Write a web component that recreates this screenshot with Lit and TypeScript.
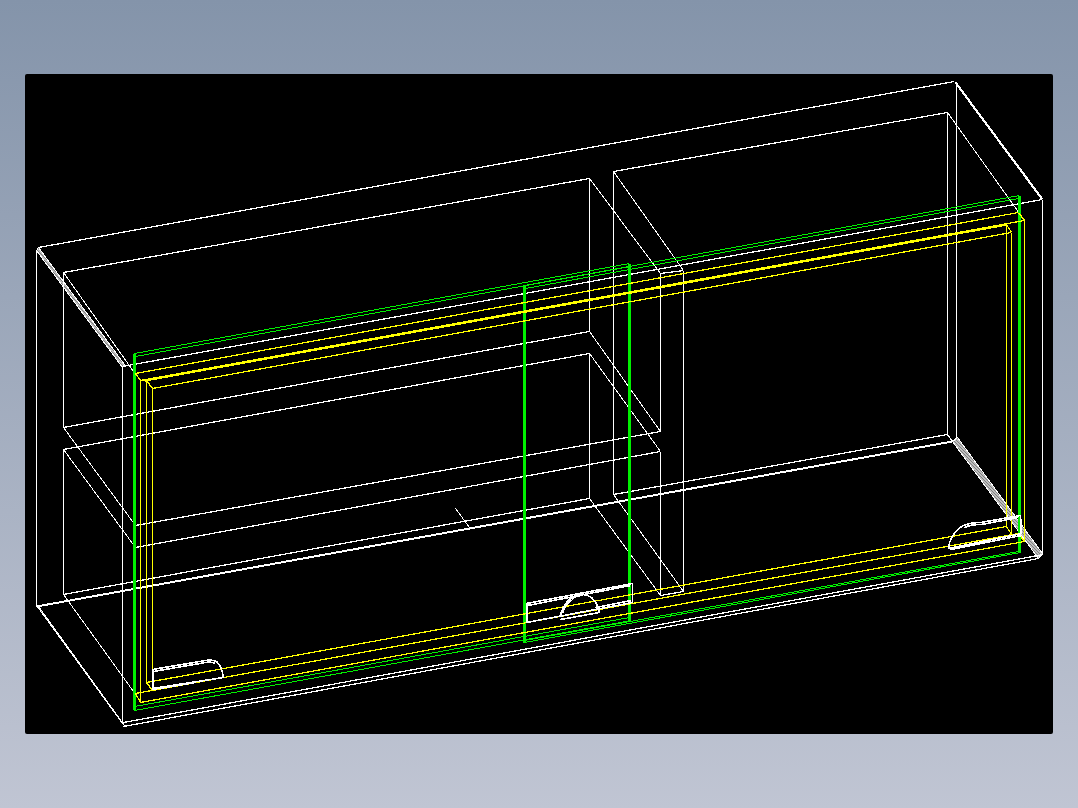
import { LitElement, html, svg, css } from 'lit';
import { customElement } from 'lit/decorators.js';

type Seg = [number, number, number, number, number?];

const LINE_W = 1.25;
const THIN_W = 1;

const WHITE: Seg[] = [
  // outer shell
  [38, 247, 954, 81],
  [36, 250, 36, 605],
  [122, 366, 1042, 199],
  [122, 367, 122, 723],
  [123, 726, 1038, 558],
  [123, 722, 1043, 554],
  [955, 82, 1042, 199, 2.2],
  [956, 82, 956, 437],
  [1042, 199, 1042, 554],
  [36, 606, 952, 441, 2],
  // back panel
  [63, 272, 589, 178],
  [613, 171, 947, 112],
  [63, 272, 63, 427],
  [63, 449, 63, 594],
  [63, 594, 589, 498],
  [613, 494, 947, 434],
  [947, 112, 947, 434],
  [947, 434, 952, 441],
  [63, 272, 133, 371, THIN_W],
  [63, 594, 133, 691, THIN_W],
  [947, 112, 1024, 220, THIN_W],
  // divider
  [589, 178, 589, 331],
  [589, 353, 589, 498],
  [613, 171, 613, 494],
  [589, 178, 660, 273, THIN_W],
  [613, 171, 683, 270, THIN_W],
  [660, 273, 683, 270],
  [660, 273, 660, 431],
  [660, 451, 660, 595],
  [683, 270, 683, 591],
  [660, 595, 683, 591],
  [589, 498, 660, 595, THIN_W],
  [613, 494, 683, 591, THIN_W],
  // shelf
  [63, 427, 589, 331],
  [63, 449, 589, 353],
  [589, 331, 660, 431, THIN_W],
  [589, 353, 660, 451, THIN_W],
  [63, 427, 135, 525, THIN_W],
  [63, 449, 135, 547, THIN_W],
  [135, 525, 660, 431],
  [135, 547, 660, 451],
  // stray tick
  [455, 508, 469, 527, THIN_W],
];

// the mitred side faces, seen nearly edge on
const BANDS = [
  '36,250 38,247 124,364 122,367',
  '36,605 38,606 124,725 122,723',
  '957,437 1042,553 1038,558 952,441',
];

const GREEN: Seg[] = [
  // left door
  [134, 353, 134, 709, 2.5],
  [134, 353, 629, 263, THIN_W],
  [135, 356, 630, 266, THIN_W],
  [134, 706, 629, 617, THIN_W],
  [134, 710, 631, 620, THIN_W],
  [629, 263, 629, 620, 3],
  // right door
  [524, 285, 524, 642, 2.5],
  [524, 285, 1019, 195, THIN_W],
  [525, 288, 1018, 198, THIN_W],
  [524, 640, 1018, 551, THIN_W],
  [524, 642, 1020, 552, THIN_W],
  [1019, 195, 1019, 552, 3],
];

const YELLOW: Seg[] = [
  // top rails
  [135, 373, 1018, 212],
  [140, 380, 1024, 220],
  [144, 380, 1006, 224, 2.4],
  [152, 388, 1011, 232],
  // bottom rails
  [135, 693, 1018, 533],
  [140, 702, 1024, 541],
  [146, 682, 1006, 526],
  // uprights
  [140, 380, 140, 702],
  [146, 380, 146, 682],
  [152, 388, 152, 690],
  [1006, 224, 1006, 526],
  [1011, 232, 1011, 534],
  [1024, 220, 1024, 541],
  // mitres
  [135, 373, 140, 380],
  [146, 380, 152, 388],
  [1006, 224, 1011, 232],
  [1018, 212, 1024, 220],
  [135, 693, 140, 702],
  [146, 682, 152, 690],
  [1006, 526, 1011, 534],
  [1018, 533, 1024, 541],
];

const HANDLES = [
  // left
  'M152 669 L205 660 Q213 659 216 661 Q221 665 223 677 L152 688 Z',
  'M153 671 L205 662 Q212 661 215 663',
  'M152 689 L195 682',
  'M153 669 L153 689',
  // middle
  'M526 603 L632 583 L632 602 L526 622 Z',
  'M527 605 L630 585 M631 600 L595 607',
  'M527 603 L527 622',
  'M560 615 Q562 605 570 598 Q578 592 587 595 Q596 598 599 612 L560 619',
  'M562 613 Q564 605 571 599 Q574 596 580 595',
  // right
  'M948 548 Q949 535 961 526 Q968 522 980 522 L1020 515 L1021 533 L948 548',
  'M950 549 L1021 535 M964 527 Q970 524 981 524 L1018 517',
  'M1020 516 L1020 534',
];

@customElement('app-root')
export class AppRoot extends LitElement {
  static styles = css`
    :host {
      display: block;
      box-sizing: border-box;
      min-height: 100vh;
      padding: 74px 25px;
      background: linear-gradient(180deg, #8494aa 0%, #c0c5d3 100%);
    }

    .viewport {
      height: 660px;
      background: #000;
      border-radius: 2px;
      overflow: hidden;
    }

    .viewport svg {
      display: block;
      width: 100%;
      height: 100%;
      fill: none;
      shape-rendering: crispEdges;
    }

    .white {
      stroke: #fff;
    }

    .green {
      stroke: #00f000;
    }

    .yellow {
      stroke: #ffff00;
    }

    .band {
      fill: url(#stipple);
      stroke: #fff;
    }
  `;

  private segs(items: Seg[], cls: string) {
    return svg`<g class=${cls}>
      ${items.map(
        ([x1, y1, x2, y2, w]) =>
          svg`<line x1=${x1} y1=${y1} x2=${x2} y2=${y2} stroke-width=${w ?? LINE_W}></line>`
      )}
    </g>`;
  }

  render() {
    return html`
      <div class="viewport">
        <svg viewBox="25 74 1028 660">
          <defs>
            <pattern id="stipple" width="3" height="3" patternUnits="userSpaceOnUse">
              <rect width="3" height="3" fill="#fff"></rect>
              <rect width="1" height="1" fill="#000"></rect>
              <rect x="1" y="1" width="1" height="1" fill="#000"></rect>
              <rect x="2" y="2" width="1" height="1" fill="#000"></rect>
            </pattern>
          </defs>
          <g transform="translate(0.5 0.5)">
            ${BANDS.map((p) => svg`<polygon class="band" points=${p} stroke-width="1"></polygon>`)}
            ${this.segs(WHITE, 'white')} ${this.segs(GREEN, 'green')} ${this.segs(YELLOW, 'yellow')}
            <g class="white" stroke-width="1.6">
              ${HANDLES.map((d) => svg`<path d=${d}></path>`)}
            </g>
          </g>
        </svg>
      </div>
    `;
  }
}
